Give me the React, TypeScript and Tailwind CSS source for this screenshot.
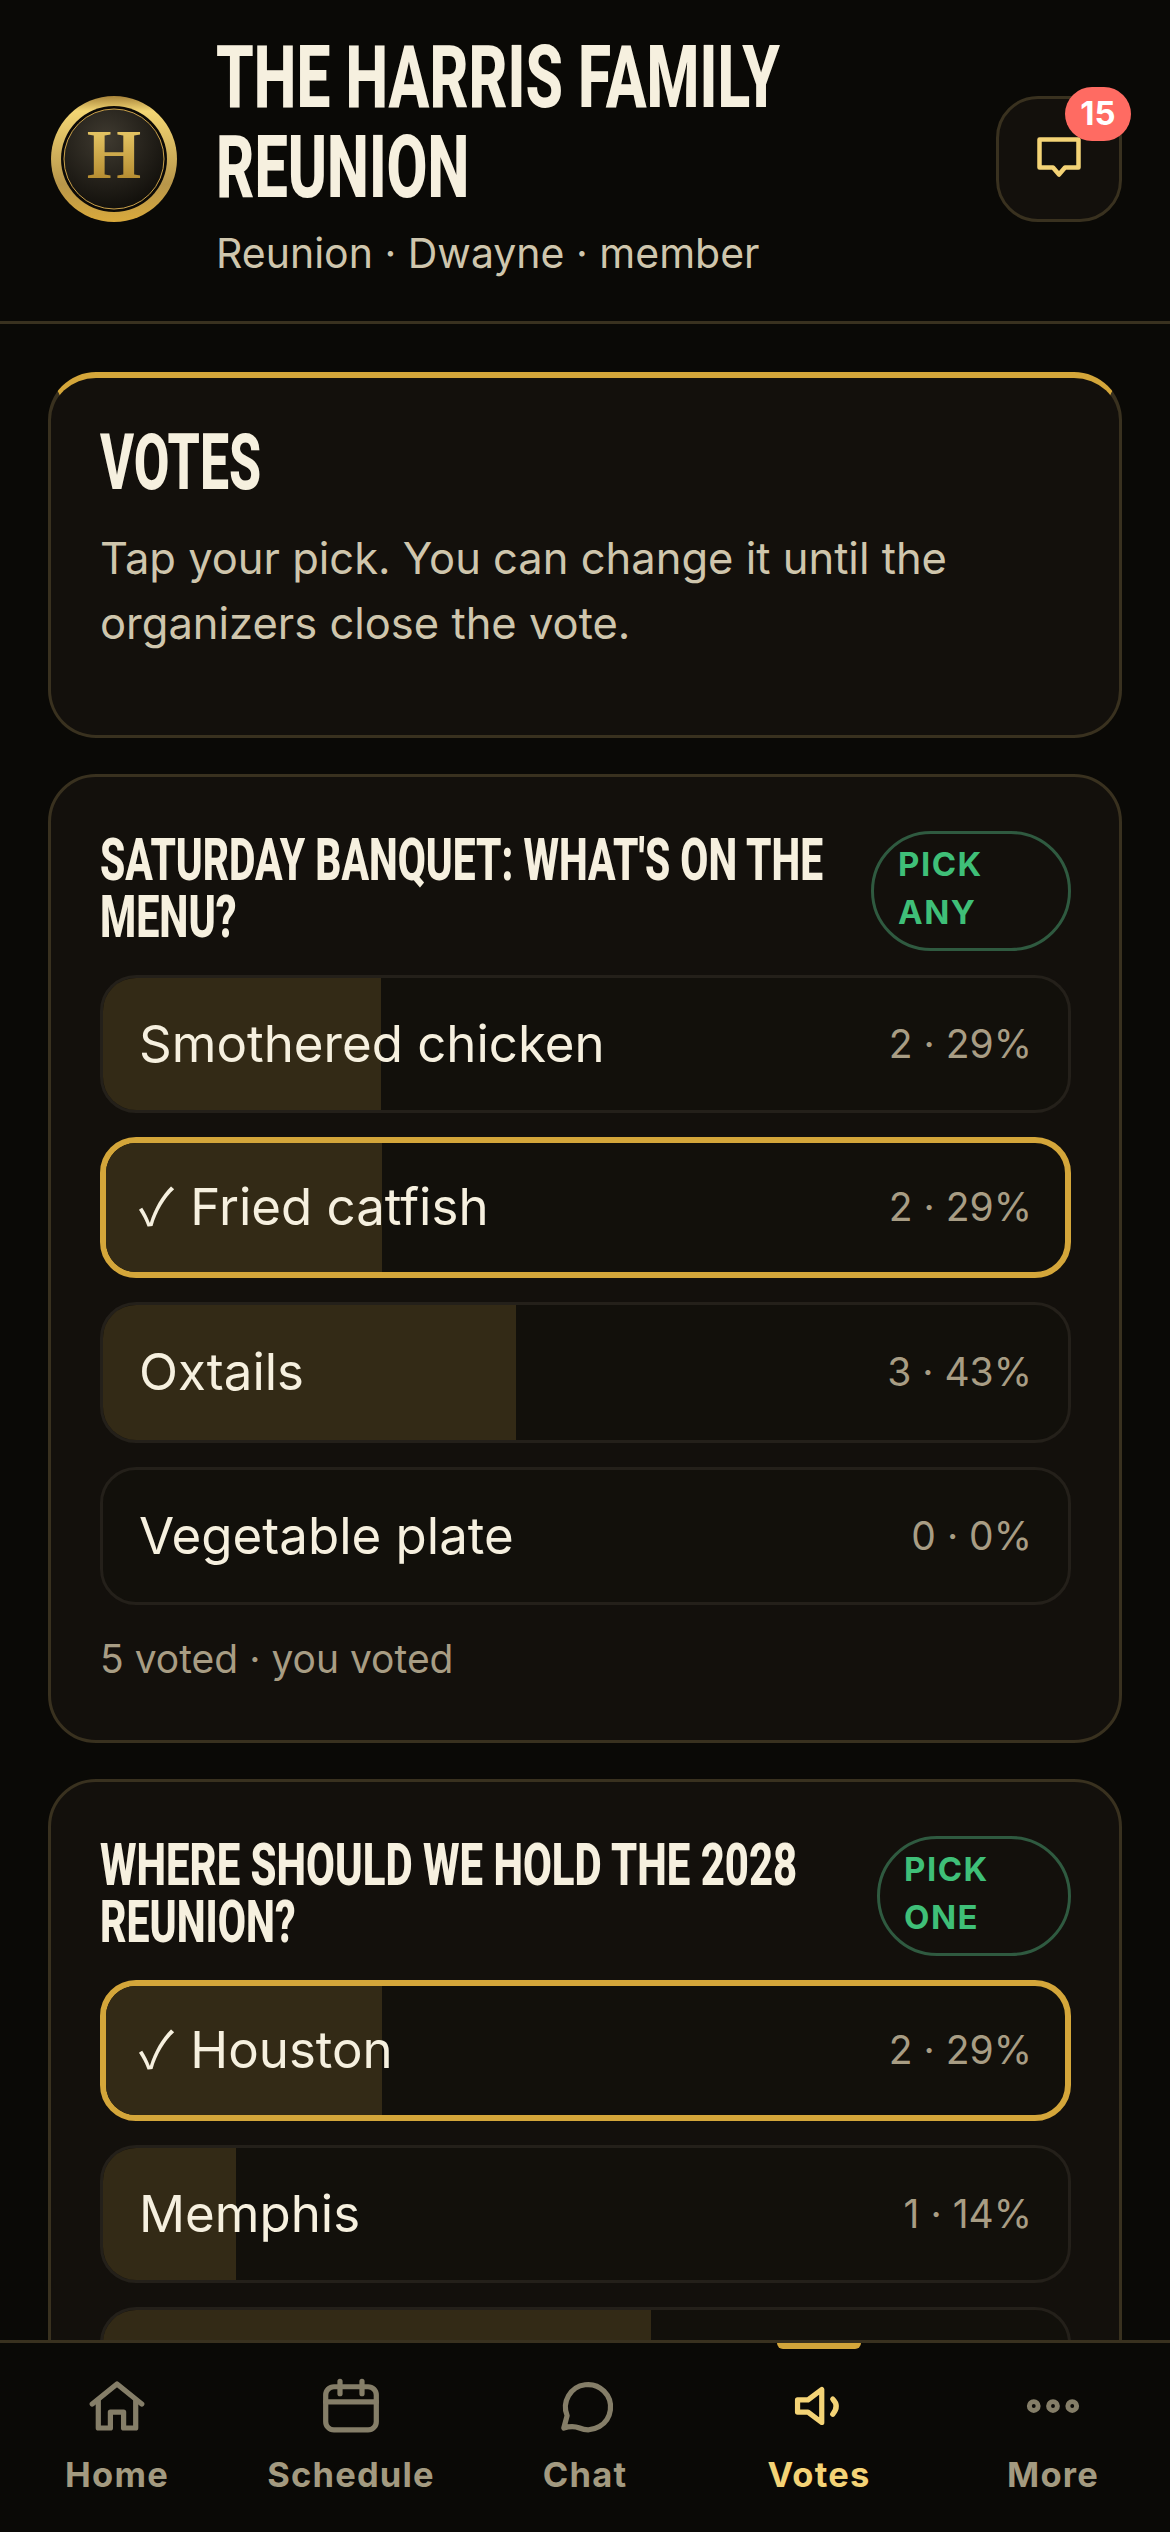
import type { ReactNode } from "react";

type PollOption = {
  label: string;
  count: number;
  percent: number;
  picked?: boolean;
  tall?: boolean;
};

type Poll = {
  title: { text: string; scale: string }[];
  pillWidth: string;
  pill: string[];
  options: PollOption[];
  footer?: string;
};

const polls: Poll[] = [
  {
    title: [
      { text: "SATURDAY BANQUET: WHAT'S ON THE", scale: "scale-x-[0.69]" },
      { text: "MENU?", scale: "scale-x-[0.7]" },
    ],
    pillWidth: "w-[200px]",
    pill: ["PICK", "ANY"],
    options: [
      { label: "Smothered chicken", count: 2, percent: 29 },
      { label: "Fried catfish", count: 2, percent: 29, picked: true, tall: true },
      { label: "Oxtails", count: 3, percent: 43, tall: true },
      { label: "Vegetable plate", count: 0, percent: 0 },
    ],
    footer: "5 voted · you voted",
  },
  {
    title: [
      { text: "WHERE SHOULD WE HOLD THE 2028", scale: "scale-x-[0.71]" },
      { text: "REUNION?", scale: "scale-x-[0.695]" },
    ],
    pillWidth: "w-[194px]",
    pill: ["PICK", "ONE"],
    options: [
      { label: "Houston", count: 2, percent: 29, picked: true, tall: true },
      { label: "Memphis", count: 1, percent: 14 },
      { label: "Atlanta", count: 4, percent: 57 },
    ],
  },
];

// condensed display face isn't installed, so Roboto gets squeezed per line
const displayLine = "block origin-left whitespace-nowrap font-['Roboto',sans-serif] font-extrabold";

function Logo() {
  return (
    <svg viewBox="0 0 126 126" className="h-[126px] w-[126px] shrink-0">
      <defs>
        <linearGradient id="ring" x1="0" y1="0" x2="0" y2="1">
          <stop offset="0" stopColor="#a8843a" />
          <stop offset="0.12" stopColor="#f3d674" />
          <stop offset="0.7" stopColor="#b8964a" />
          <stop offset="1" stopColor="#d9a93c" />
        </linearGradient>
        <radialGradient id="face" cx="0.42" cy="0.3" r="0.75">
          <stop offset="0" stopColor="#3f3a30" />
          <stop offset="1" stopColor="#0f0d09" />
        </radialGradient>
        <linearGradient id="letter" x1="0" y1="0" x2="0" y2="1">
          <stop offset="0" stopColor="#f3d674" />
          <stop offset="1" stopColor="#a87c22" />
        </linearGradient>
      </defs>
      <circle cx="63" cy="63" r="63" fill="url(#ring)" />
      <circle cx="63" cy="63" r="53" fill="#0c0a07" />
      <circle cx="63" cy="63" r="50" fill="url(#face)" stroke="#c9a04a" strokeWidth="1" />
      <text
        x="63"
        y="82"
        textAnchor="middle"
        fontFamily="'Liberation Serif', serif"
        fontWeight="700"
        fontSize="70"
        fill="url(#letter)"
      >
        H
      </text>
    </svg>
  );
}

function Header() {
  return (
    <header className="flex h-[324px] shrink-0 items-start border-b-[3px] border-[#39311f] pl-[51px] pr-[48px]">
      <div className="mt-[96px]">
        <Logo />
      </div>
      <div className="ml-[39px] mt-[32px] min-w-0 flex-1">
        <h1 className="text-[88px] leading-[90px] text-[#f6f0df]">
          <span className={`${displayLine} scale-x-[0.687]`}>THE HARRIS FAMILY</span>
          <span className={`${displayLine} scale-x-[0.675]`}>REUNION</span>
        </h1>
        <p className="mt-[11px] text-[41px] leading-[60px] text-[#cfc6ad]">Reunion · Dwayne · member</p>
      </div>
      <div className="relative mt-[96px] flex h-[126px] w-[126px] shrink-0 items-center justify-center rounded-[42px] border-[3px] border-[#39311f] bg-[#13100c]">
        <svg viewBox="0 0 44 41" className="mb-[3px] h-[41px] w-[44px]" fill="none" stroke="#f4d376" strokeWidth="4.500" strokeLinejoin="round">
          <path d="M2.500 2.500h39v28H28l-6 7-6-7H2.500z" />
        </svg>
        <span className="absolute left-[66px] top-[-12px] flex h-[54px] w-[66px] items-center justify-center rounded-full bg-[#ff6b62] text-[33px] font-bold text-white">
          15
        </span>
      </div>
    </header>
  );
}

function OptionRow({ option }: { option: PollOption }) {
  return (
    <div
      className={`relative flex items-center justify-between overflow-hidden rounded-[36px] bg-[#12100b] ${option.tall ? "h-[141px]" : "h-[138px]"} ${
        option.picked ? "border-[6px] border-[#d4a63a] pl-[33px] pr-[33px]" : "border-[3px] border-[#24201a] pl-[36px] pr-[36px]"
      }`}
    >
      <div className="absolute inset-y-0 left-0 bg-[#332a16]" style={{ width: `calc(${option.percent}% - 2px)` }} />
      <span className="relative text-[51px] text-[#f6f0df]">
        {option.picked ? <span className="mr-[5px] font-['Noto_Sans_CJK_JP',sans-serif] leading-none">✓ </span> : null}
        {option.label}
      </span>
      <span className="relative text-[39px] text-[#a89d84]">
        {option.count} · {option.percent}%
      </span>
    </div>
  );
}

function PollCard({ poll }: { poll: Poll }) {
  return (
    <section className="rounded-[48px] border-[3px] border-[#39311f] bg-[#13100c] pb-[54px] pl-[49px] pr-[48px] pt-[54px]">
      <div className="flex items-start justify-between">
        <h2 className="min-w-0 text-[59px] leading-[57px] text-[#f6f0df]">
          {poll.title.map((line) => (
            <span key={line.text} className={`${displayLine} ${line.scale}`}>
              {line.text}
            </span>
          ))}
        </h2>
        <div
          className={`${poll.pillWidth} shrink-0 rounded-[60px] border-[3px] border-[#2f5a40] pb-[12px] pl-[24px] pt-[6px] text-[33px] font-bold leading-[48px] tracking-[1.5px] text-[#3fbf78]`}
        >
          {poll.pill[0]}
          <br />
          {poll.pill[1]}
        </div>
      </div>
      <div className="mt-[24px] flex flex-col gap-[24px]">
        {poll.options.map((option) => (
          <OptionRow key={option.label} option={option} />
        ))}
      </div>
      {poll.footer ? <p className="mt-[27px] text-[39px] leading-[54px] text-[#a89d84]">{poll.footer}</p> : null}
    </section>
  );
}

function NavItem({ label, active, children }: { label: string; active?: boolean; children: ReactNode }) {
  return (
    <div className="relative flex flex-col items-center">
      {active ? <div className="absolute top-0 h-[6px] w-[84px] rounded-b-[6px] bg-[#d4a63a]" /> : null}
      <div className={`mt-[30px] flex h-[66px] w-[66px] items-center justify-center ${active ? "text-[#f4d376]" : "text-[#857e68]"}`}>
        {children}
      </div>
      <span className={`mt-[12px] text-[34.5px] font-bold leading-[48px] tracking-[1.2px] ${active ? "text-[#f4d376]" : "text-[#a39a80]"}`}>
        {label}
      </span>
    </div>
  );
}

function BottomNav() {
  const iconProps = {
    viewBox: "0 0 24 24",
    fill: "none",
    stroke: "currentColor",
    strokeWidth: 1.9,
    strokeLinecap: "round" as const,
    strokeLinejoin: "round" as const,
    className: "h-[66px] w-[66px]",
  };

  return (
    <nav className="grid h-[192px] shrink-0 grid-cols-5 border-t-[3px] border-[#39311f] bg-[#0a0906]">
      <NavItem label="Home">
        <svg {...iconProps}>
          <path d="M3 11.300 12 4l9 7.300" />
          <path d="M5.200 10v10h4.400v-5.800h4.800V20h4.400V10" />
        </svg>
      </NavItem>
      <NavItem label="Schedule">
        <svg {...iconProps}>
          <rect x="2.800" y="5" width="18.400" height="15.700" rx="3" />
          <path d="M2.800 10.500h18.400M8 3v4.500M16 3v4.500" />
        </svg>
      </NavItem>
      <NavItem label="Chat">
        <svg {...iconProps}>
          <path d="M5.500 15.500A8.200 8.200 0 1 1 10 20Q7.500 19 4.300 20z" />
        </svg>
      </NavItem>
      <NavItem label="Votes" active>
        <svg {...iconProps}>
          <path d="M13 6v12l-5-3.800H4.200V9.800H8z" />
          <path d="M17 9.500Q19.500 12 17 15" />
        </svg>
      </NavItem>
      <NavItem label="More">
        <svg {...iconProps} strokeWidth={1.8}>
          <circle cx="5" cy="12" r="1.600" />
          <circle cx="12" cy="12" r="1.600" />
          <circle cx="19" cy="12" r="1.600" />
        </svg>
      </NavItem>
    </nav>
  );
}

export default function App() {
  return (
    <div className="flex h-[2532px] w-full flex-col overflow-hidden bg-[#0a0906] font-['Inter',sans-serif]">
      <Header />
      <main className="min-h-0 flex-1 overflow-hidden px-[48px] pt-[48px]">
        <div className="flex flex-col gap-[36px]">
          <section className="h-[366px] rounded-[48px] border-[3px] border-[#39311f] border-t-[6px] border-t-[#d4a63a] bg-[#13100c] pl-[49px] pr-[48px] pt-[46px]">
            <h2 className="text-[77px] leading-[78px] text-[#f6f0df]">
              <span className={`${displayLine} scale-x-[0.673]`}>VOTES</span>
            </h2>
            <p className="mt-[24px] text-[43.5px] leading-[65px] text-[#cfc6ad]">
              Tap your pick. You can change it until the organizers close the vote.
            </p>
          </section>
          {polls.map((poll) => (
            <PollCard key={poll.title[0].text} poll={poll} />
          ))}
        </div>
      </main>
      <BottomNav />
    </div>
  );
}
